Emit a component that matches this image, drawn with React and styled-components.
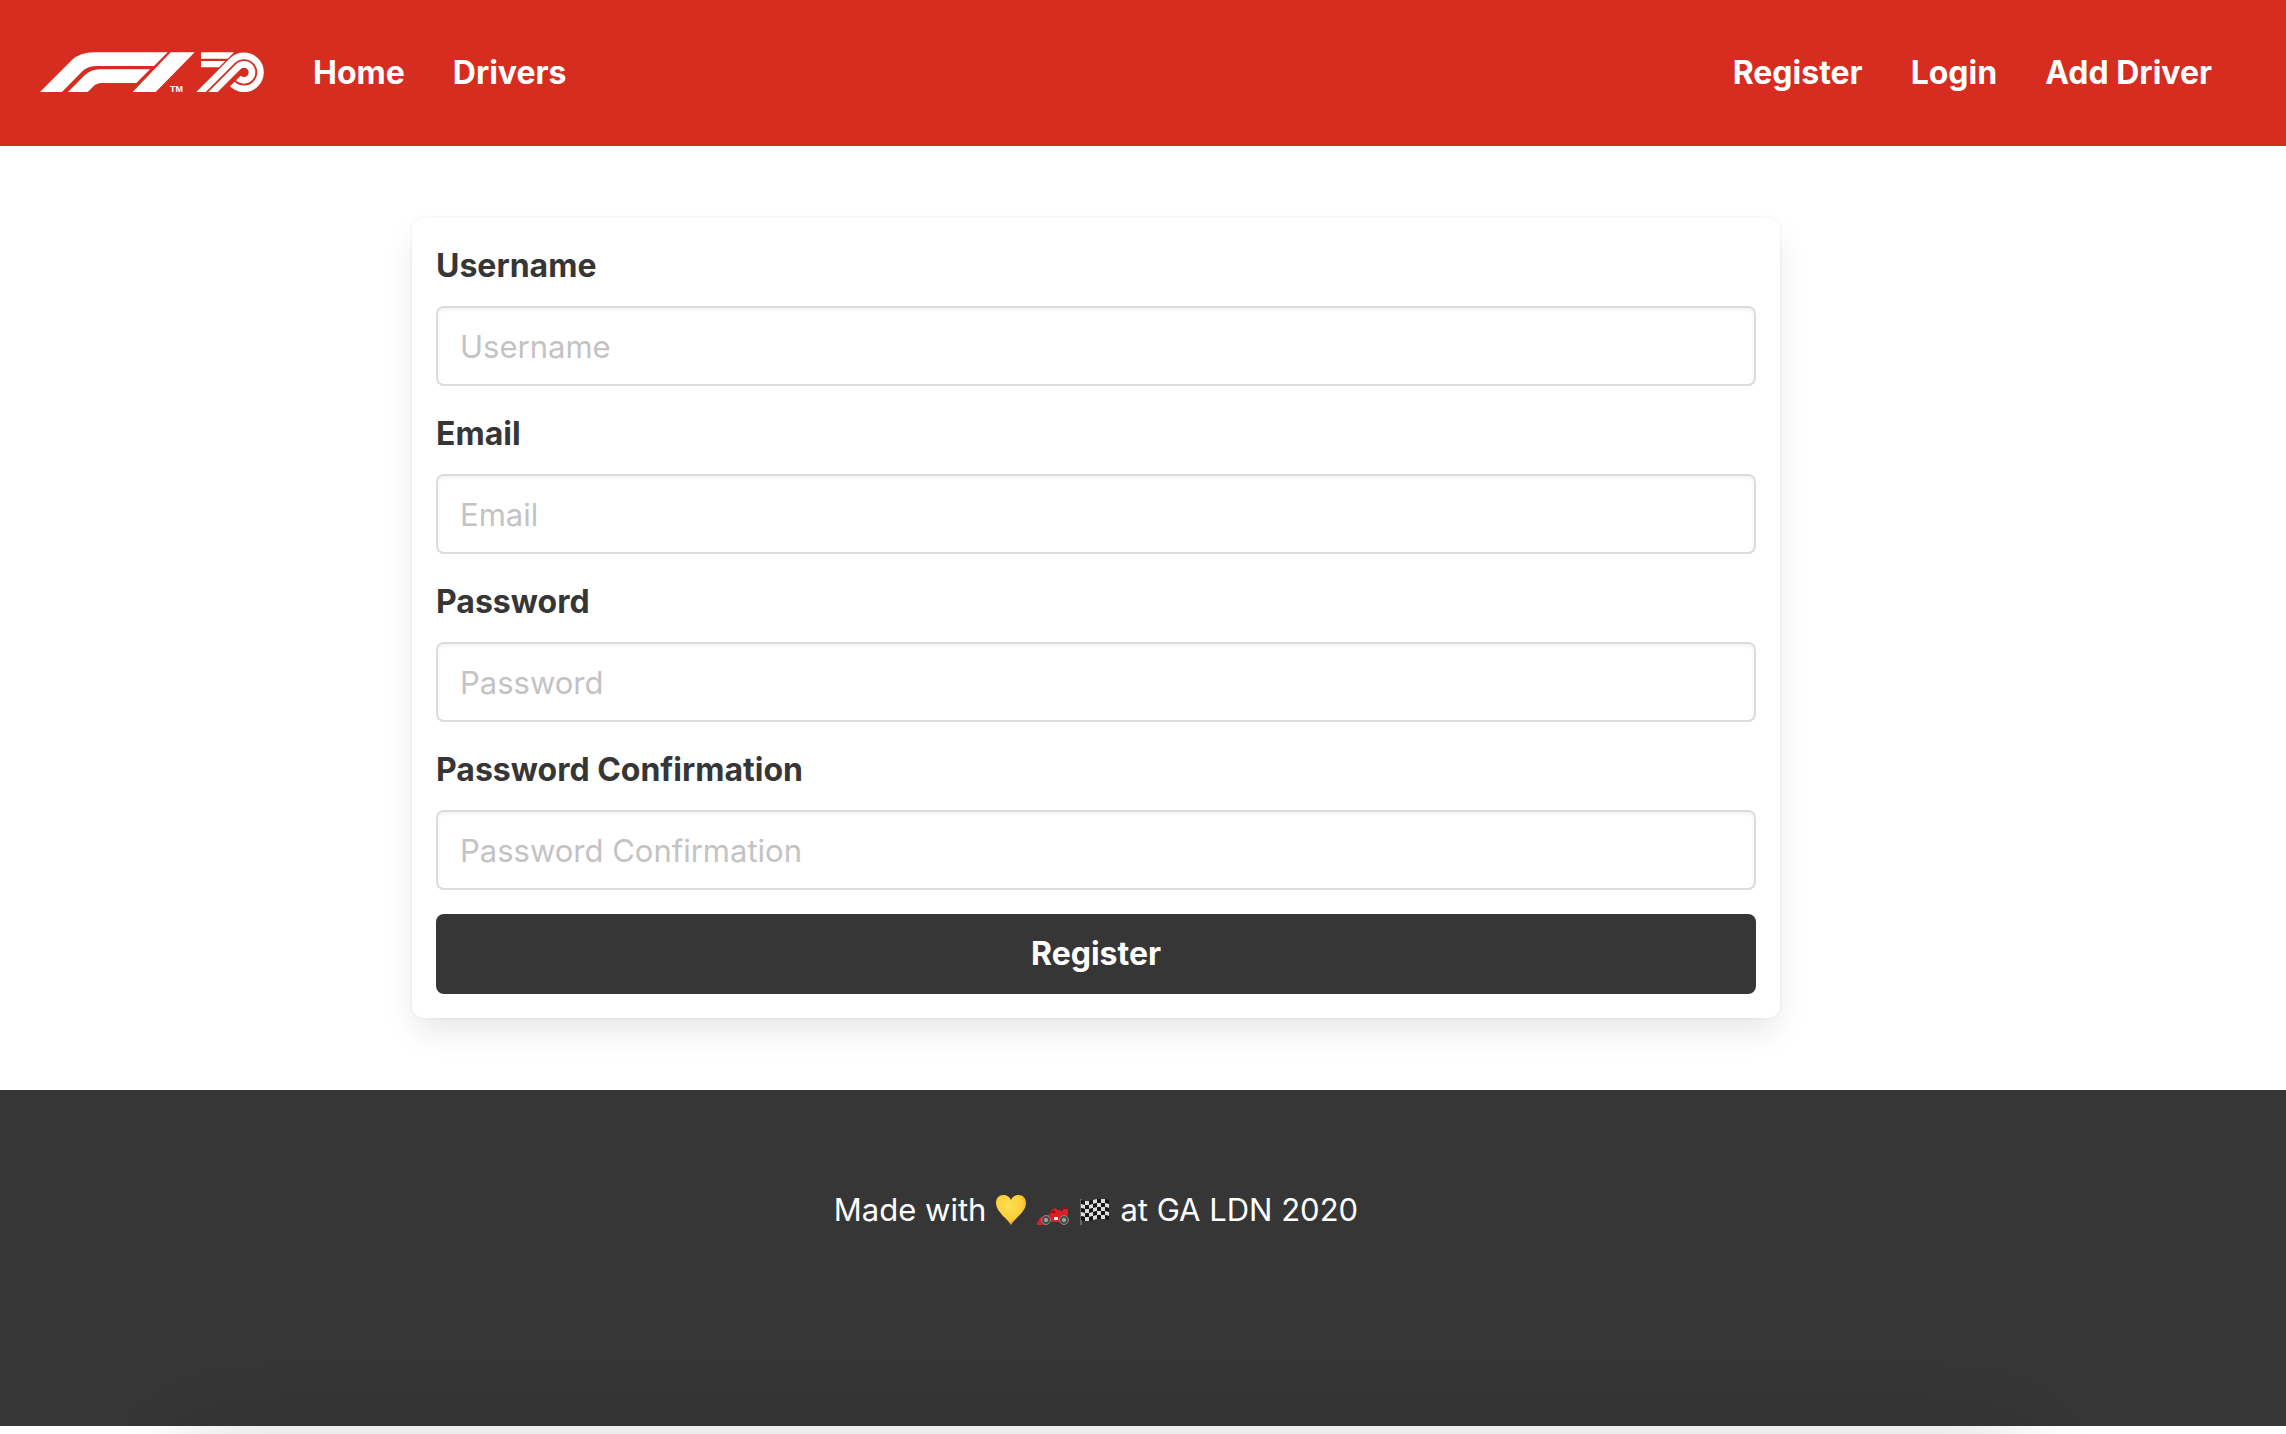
import React from 'react';
import styled, { createGlobalStyle } from 'styled-components';

const GlobalStyle = createGlobalStyle`
  *, *::before, *::after { box-sizing: border-box; }
  body {
    margin: 0;
    background: #fff;
    color: #4a4a4a;
    font-family: Inter, "Liberation Sans", sans-serif;
    font-size: 31px;
    line-height: 48px;
  }
  input, button { font: inherit; }
`;

const Page = styled.div`
  position: relative;
  min-height: 100vh;
  overflow: hidden;
`;

const Navbar = styled.nav`
  display: flex;
  justify-content: space-between;
  align-items: center;
  min-height: 146px;
  padding: 0 50px 0 16px;
  background: #d62d20;
`;

const NavGroup = styled.div`
  display: flex;
  align-items: center;
`;

const NavItem = styled.a`
  display: flex;
  align-items: center;
  padding: 16px 24px;
  color: #fff;
  font-size: 32px;
  font-weight: 650;
  text-decoration: none;
`;

const LogoArt = styled.svg`
  display: block;
  width: 225px;
  height: 46px;
  fill: #fff;
  overflow: visible;
`;

const TradeMark = styled.text`
  font-family: "Liberation Sans", sans-serif;
  font-size: 27px;
`;

const Section = styled.main`
  padding: 72px 142px 72px 48px;
`;

const Card = styled.form`
  display: flex;
  flex-direction: column;
  gap: 24px;
  max-width: 1368px;
  margin: 0 auto;
  padding: 24px;
  border-radius: 12px;
  background: #fff;
  box-shadow: 0 16px 32px -4px rgba(10, 10, 10, 0.1), 0 0 0 2px rgba(10, 10, 10, 0.02);
`;

const Field = styled.div`
  display: flex;
  flex-direction: column;
  gap: 16px;
`;

const Label = styled.label`
  color: #363636;
  font-size: 32px;
  font-weight: 650;
`;

const Input = styled.input`
  width: 100%;
  height: 80px;
  padding: 0 22px;
  border: 2px solid #dbdbdb;
  border-radius: 8px;
  background: #fff;
  box-shadow: inset 0 2px 4px rgba(10, 10, 10, 0.05);
  color: #363636;
  &::placeholder { color: #c3c3c3; opacity: 1; }
`;

const Submit = styled.button`
  height: 80px;
  border: 0;
  border-radius: 8px;
  background: #363636;
  color: #fff;
  font-size: 32px;
  font-weight: 650;
  cursor: pointer;
`;

const Footer = styled.footer`
  padding: 96px 142px 192px 48px;
  background: #363636;
  color: #fff;
`;

const Credit = styled.p`
  display: flex;
  justify-content: center;
  align-items: center;
  gap: 8px;
  margin: 0;
`;

const Emoji = styled.svg`
  width: 34px;
  height: 34px;
`;

const BottomShade = styled.div`
  position: absolute;
  top: 100%;
  left: 180px;
  right: 260px;
  height: 160px;
  border-radius: 40px;
  box-shadow: 0 12px 84px rgba(0, 0, 0, 0.2);
  pointer-events: none;
`;

const Logo = () => (
  <LogoArt viewBox="60 60 675 138" role="img" aria-label="F1 70">
    <defs>
      <clipPath id="seventy">
        <rect x="525" y="60" width="215" height="126" />
      </clipPath>
    </defs>
    <path d="M60 186 L156 90 Q180 67 222 67 H443 L402 108 H232 Q203 108 187 124 L126 186 Z" />
    <path d="M144 186 L194 136 Q212 118 240 118 H390 L349 159 H246 Q229 159 219 170 L203 186 Z" />
    <path d="M452 67 H524 L407 186 H338 Z" />
    <TradeMark x="450" y="186">TM</TradeMark>
    <path d="M543 67 H642 L623 86 H543 Z" />
    <path d="M543 93 H616 L597 112 H543 Z" />
    <g clipPath="url(#seventy)" fill="none" stroke="#fff">
      <path strokeWidth="20" d="M527 202 L637 92 A49.500 49.500 0 1 1 637 162" />
      <path strokeWidth="20" d="M563 202 L655 110 A24 24 0 1 1 655 144" />
    </g>
  </LogoArt>
);

const Heart = () => (
  <Emoji viewBox="0 0 34 34" role="img" aria-label="yellow heart">
    <defs>
      <radialGradient id="heart" cx="0.42" cy="0.35" r="0.7">
        <stop offset="0" stopColor="#ffe052" />
        <stop offset="0.65" stopColor="#fdcf3c" />
        <stop offset="1" stopColor="#f09a25" />
      </radialGradient>
    </defs>
    <path fill="url(#heart)" d="M17 32 C14 26 2 19 2 10 C2 5 5 2 9.500 2 C13 2 16 4 17 7 C18 4 21 2 24.500 2 C29 2 32 5 32 10 C32 19 20 26 17 32 Z" />
  </Emoji>
);

const RacingCar = () => (
  <Emoji viewBox="0 0 34 34" role="img" aria-label="racing car">
    <path fill="#e31b23" d="M2 28 L5 24 L14 21 L16 17 L19 15 L22 17 L27 18 V14 H32 V21 L30 29 H8 L2 31 Z" />
    <path fill="#8d1216" d="M27 14 H32 V16 H27 Z M14 20 L18 17 L20 20 Z" />
    <path fill="#e31b23" d="M1 29 H9 V32 H1 Z" />
    <path fill="#fff" d="M18 24 H22 V27 H18 Z" />
    <g fill="#4b4b4b" stroke="#858585" strokeWidth="1">
      <circle cx="10" cy="27" r="4.500" />
      <circle cx="28" cy="27" r="4.500" />
    </g>
    <g fill="#a5a5a5">
      <circle cx="10" cy="27" r="2" />
      <circle cx="28" cy="27" r="2" />
    </g>
  </Emoji>
);

const FLAG_ROWS = [0, 1, 2, 3, 4];
const FLAG_COLUMNS = [0, 1, 2, 3, 4, 5, 6];
const FLAG_WAVE = [1, 2, 2, 1, 0, 0, 0, 1];

const ChequeredFlag = () => (
  <Emoji viewBox="0 0 34 34" role="img" aria-label="chequered flag">
    <path stroke="#6f7a80" strokeWidth="1.500" d="M3 6 V32" />
    {FLAG_ROWS.map((row) =>
      FLAG_COLUMNS.map((column) => {
        const x = 3 + column * 4;
        const top = 6 + row * 4;
        const left = FLAG_WAVE[column];
        const right = FLAG_WAVE[column + 1];
        return (
          <path
            key={`${row}-${column}`}
            fill={(row + column) % 2 ? '#dcdcdc' : '#171717'}
            d={`M${x} ${top + left} L${x + 4} ${top + right} V${top + 4 + right} L${x} ${top + 4 + left} Z`}
          />
        );
      })
    )}
  </Emoji>
);

const fields = [
  { name: 'username', label: 'Username', type: 'text' },
  { name: 'email', label: 'Email', type: 'email' },
  { name: 'password', label: 'Password', type: 'password' },
  { name: 'passwordConfirmation', label: 'Password Confirmation', type: 'password' },
];

export default function App() {
  return (
    <Page>
      <GlobalStyle />
      <Navbar>
        <NavGroup>
          <NavItem href="#home"><Logo /></NavItem>
          <NavItem href="#home">Home</NavItem>
          <NavItem href="#drivers">Drivers</NavItem>
        </NavGroup>
        <NavGroup>
          <NavItem href="#register">Register</NavItem>
          <NavItem href="#login">Login</NavItem>
          <NavItem href="#add-driver">Add Driver</NavItem>
        </NavGroup>
      </Navbar>
      <Section>
        <Card onSubmit={(event) => event.preventDefault()}>
          {fields.map(({ name, label, type }) => (
            <Field key={name}>
              <Label htmlFor={name}>{label}</Label>
              <Input id={name} name={name} type={type} placeholder={label} />
            </Field>
          ))}
          <Submit type="submit">Register</Submit>
        </Card>
      </Section>
      <Footer>
        <Credit>
          <span>Made with</span>
          <Heart />
          <RacingCar />
          <ChequeredFlag />
          <span>at GA LDN 2020</span>
        </Credit>
      </Footer>
      <BottomShade />
    </Page>
  );
}
